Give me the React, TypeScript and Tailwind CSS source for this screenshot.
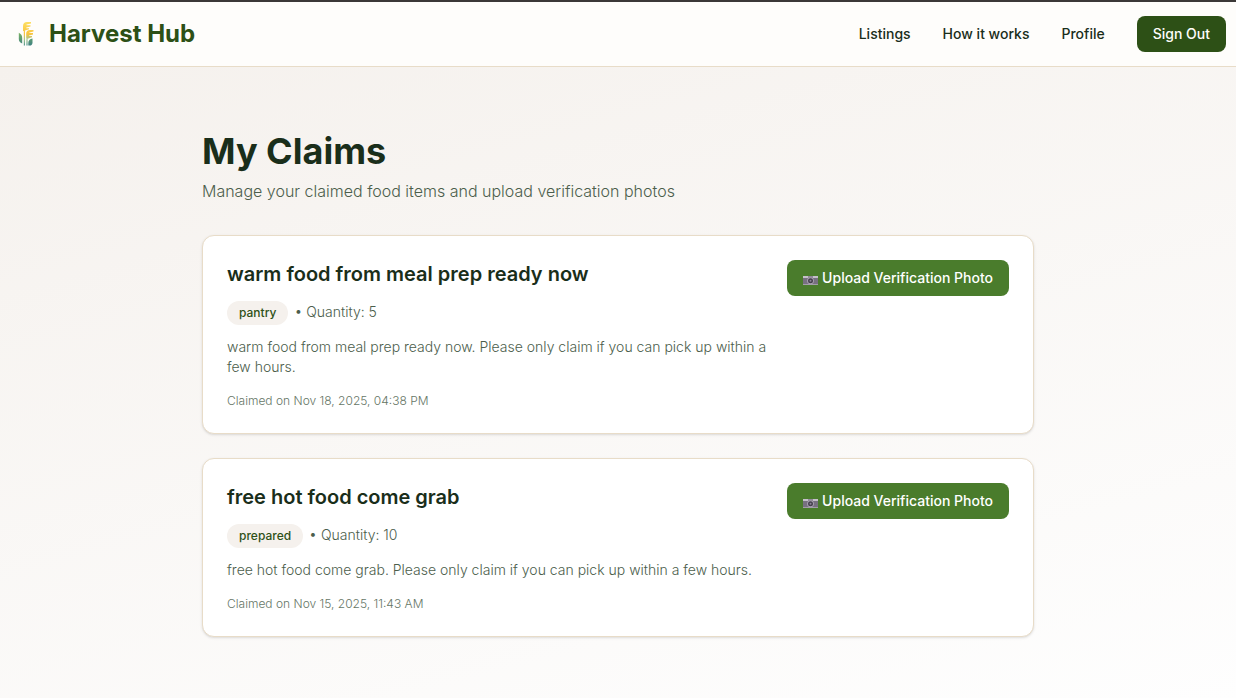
interface Claim {
    id: number;
    title: string;
    category: string;
    quantity: number;
    description: string;
    claimedAt: string;
}

const claims: Claim[] = [
    {
        id: 1,
        title: "warm food from meal prep ready now",
        category: "pantry",
        quantity: 5,
        description: "warm food from meal prep ready now. Please only claim if you can pick up within a few hours.",
        claimedAt: "Nov 18, 2025, 04:38 PM",
    },
    {
        id: 2,
        title: "free hot food come grab",
        category: "prepared",
        quantity: 10,
        description: "free hot food come grab. Please only claim if you can pick up within a few hours.",
        claimedAt: "Nov 15, 2025, 11:43 AM",
    },
];

const navLinks = ["Listings", "How it works", "Profile"];

function WheatLogo() {
    return (
        <svg viewBox="0 0 16 26" className="h-[26px] w-4" fill="none" aria-hidden="true">
            <defs>
                <linearGradient id="wheat" x1="0" y1="1" x2="0" y2="25" gradientUnits="userSpaceOnUse">
                    <stop offset="0" stopColor="#fddf62" />
                    <stop offset="0.5" stopColor="#f9c440" />
                    <stop offset="0.72" stopColor="#a9c88c" />
                    <stop offset="1" stopColor="#4b9492" />
                </linearGradient>
                <linearGradient id="leaf" x1="0" y1="11" x2="0" y2="25" gradientUnits="userSpaceOnUse">
                    <stop offset="0" stopColor="#7fb662" />
                    <stop offset="1" stopColor="#3b7f83" />
                </linearGradient>
            </defs>
            <path d="M5 10V5C5 2.400 6.600 1 9 1H13V2.400L8.500 3.400V4.200H12.500V5.500L8.300 6.600V7.200H11V8.200L7 9.600V24.500H5.800V10z" fill="url(#wheat)" />
            <path d="M8.200 17V12.600C8.200 10.200 9.600 9 12 9H15.500V10.400L11.300 11.400V12.100H15V13.400L11 14.500V15.100H14V16.200L9.600 17.700V24.500H8.400V17z" fill="url(#wheat)" />
            <path d="M.8 11.800C3 12.800 4.200 14.600 4.200 17V22.500C2 21.800.8 20.200.8 18z" fill="url(#leaf)" />
            <path d="M14.500 17.500C11.800 18 10.300 19.600 10.300 22V24.600H11.500C13.500 24.600 14.500 23.400 14.500 21.500z" fill="url(#leaf)" />
        </svg>
    );
}

function CameraIcon() {
    return (
        <svg viewBox="0 0 15 11" className="mt-1 h-[11px] w-[15px]" aria-hidden="true">
            <rect y="1" width="15" height="9" fill="#777080" />
            <rect y="1" width="15" height="2" fill="#c5c0ca" />
            <rect x="5" y="1" width="5" height="2" fill="#8f8997" />
            <rect y="9" width="15" height="1" fill="#a39da9" />
            <circle cx="7.500" cy="5.800" r="3.400" fill="#aaa3b1" />
            <circle cx="7.500" cy="5.800" r="2.500" fill="#46404e" />
            <circle cx="7.500" cy="5.800" r="1" fill="#8d8498" />
        </svg>
    );
}

function Header() {
    return (
        <header className="border-t-2 border-b border-t-[#3b3838] border-b-[#e8dcc8] bg-[#fefdfb]">
            <div className="flex h-16 items-center justify-between pr-2.5 pl-[18px]">
                <a href="#" className="flex items-center gap-[15px] text-2xl font-bold text-[#2d5016]">
                    <WheatLogo />
                    Harvest Hub
                </a>
                <nav className="flex items-center gap-8 text-sm font-medium">
                    {navLinks.map((link) => (
                        <a key={link} href="#" className="text-[#1a2e1a]">
                            {link}
                        </a>
                    ))}
                    <button type="button" className="h-9 rounded-lg bg-[#2d5016] px-4 text-[#fefdfb]">
                        Sign Out
                    </button>
                </nav>
            </div>
        </header>
    );
}

function ClaimCard({ claim }: { claim: Claim }) {
    return (
        <article className="flex items-start justify-between gap-3 rounded-xl border border-[#e8dcc8] bg-white p-6 shadow-sm">
            <div className="flex-1">
                <h2 className="mb-3 text-xl font-semibold text-[#1a2e1a]">{claim.title}</h2>
                <div className="mb-3 flex h-[25px] items-end gap-1.5">
                    <span className="rounded-full bg-[#f5f1ed] px-3 py-1 text-xs font-medium text-[#2d5016]">{claim.category}</span>
                    <span className="pb-[3px] text-sm font-light text-[#4c5e4c]">• Quantity: {claim.quantity}</span>
                </div>
                <p className="mb-4 text-sm font-light text-[#4c5e4c]">{claim.description}</p>
                <p className="text-xs font-light text-[#667666]">Claimed on {claim.claimedAt}</p>
            </div>
            <button type="button" className="flex h-9 items-center gap-1 rounded-lg bg-[#4a7c2c] px-4 text-sm font-medium text-white">
                <CameraIcon />
                Upload Verification Photo
            </button>
        </article>
    );
}

export default function App() {
    return (
        <div className="flex min-h-screen flex-col bg-white font-['Inter','Liberation_Sans',sans-serif]">
            <Header />
            <main className="flex-1 bg-linear-[165deg] from-[#f5f1ed] to-[#fefefe] py-16">
                <div className="mx-auto max-w-4xl px-8">
                    <h1 className="mb-2 text-4xl font-bold text-[#1a2e1a]">My Claims</h1>
                    <p className="mb-8 text-base font-light text-[#4c5e4c]">Manage your claimed food items and upload verification photos</p>
                    <div className="flex flex-col gap-6">
                        {claims.map((claim) => (
                            <ClaimCard key={claim.id} claim={claim} />
                        ))}
                    </div>
                </div>
            </main>
        </div>
    );
}
